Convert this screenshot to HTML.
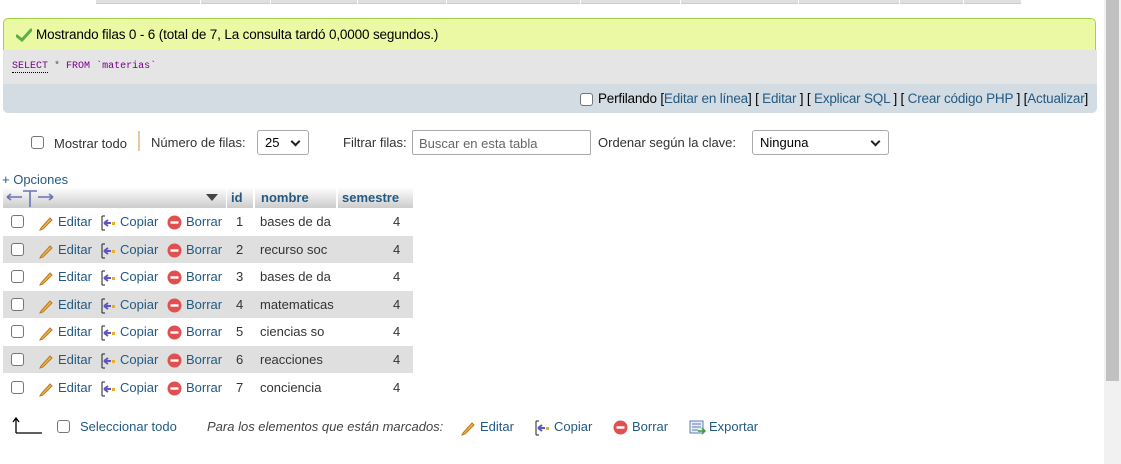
<!DOCTYPE html>
<html><head><meta charset="utf-8"><style>
*{box-sizing:border-box}
body{margin:0;width:1121px;height:464px;overflow:hidden;background:#fff;font-family:"Liberation Sans",Arial,sans-serif;font-size:13px;color:#444;position:relative}
.a{position:absolute;white-space:nowrap}
a,.l{color:#235a81;text-decoration:none}
.cb{position:absolute;width:13px;height:13px;border:1px solid #767676;border-radius:3px;background:#fff}
.row{position:absolute;left:3px;width:410px;height:27px}
.sel{position:absolute;border:1px solid #aaa;border-radius:3px;background:#fff;color:#000;font-size:13px;padding:0 0 0 7px;line-height:24px}
.sel:after{content:"";position:absolute;right:9px;top:7px;width:5px;height:5px;border-right:2px solid #222;border-bottom:2px solid #222;transform:rotate(45deg)}
</style></head><body>
<div class="a" style="left:96px;top:0;width:925px;height:4px;background:#e0e0e0;border-bottom:1px solid #ccc"></div>
<div class="a" style="left:200px;top:0;width:1px;height:4px;background:#fff"></div>
<div class="a" style="left:270px;top:0;width:1px;height:4px;background:#fff"></div>
<div class="a" style="left:357px;top:0;width:1px;height:4px;background:#fff"></div>
<div class="a" style="left:446px;top:0;width:1px;height:4px;background:#fff"></div>
<div class="a" style="left:580px;top:0;width:1px;height:4px;background:#fff"></div>
<div class="a" style="left:680px;top:0;width:1px;height:4px;background:#fff"></div>
<div class="a" style="left:798px;top:0;width:1px;height:4px;background:#fff"></div>
<div class="a" style="left:899px;top:0;width:1px;height:4px;background:#fff"></div>
<div class="a" style="left:963px;top:0;width:1px;height:4px;background:#fff"></div>
<div class="a" style="left:1104px;top:0;width:17px;height:464px;background:#f1f1f1"></div>
<div class="a" style="left:1106px;top:0;width:13px;height:381px;background:#c1c1c1"></div>
<div class="a" style="left:3px;top:18px;width:1093px;height:33px;background:#ebf8a4;border:1px solid #a2d246;border-bottom:none;border-radius:5px 5px 0 0"></div>
<svg class="a" style="left:16px;top:28px" width="16" height="14" viewBox="0 0 16 14"><path d="M1 8 L6 12 L15 2" stroke="#5ab040" stroke-width="3" fill="none" stroke-linecap="round"/></svg>
<div class="a" style="left:36px;top:27px;color:#000;font-size:13.5px;letter-spacing:-0.15px">Mostrando filas 0 - 6 (total de 7, La consulta tardó 0,0000 segundos.)</div>
<div class="a" style="left:3px;top:50px;width:1094px;height:34px;background:#e5e5e5"></div>
<div class="a" style="left:12px;top:61px;font-family:'Liberation Mono',monospace;font-size:10px;color:#708"><span style="border-bottom:1px dotted #000;color:#708">SELECT</span> <span style="color:#555">*</span> FROM <span style="color:#708">`materias`</span></div>
<div class="a" style="left:3px;top:84px;width:1094px;height:29px;background:#d3dce3;border-radius:0 0 5px 5px"></div>
<div class="cb" style="left:580px;top:93px"></div>
<div class="a" style="left:598px;top:91px;color:#000;font-size:13.5px;letter-spacing:-0.2px">Perfilando [<span class="l">Editar en línea</span>] [ <span class="l">Editar</span> ] [ <span class="l">Explicar SQL</span> ] [ <span class="l">Crear código PHP</span> ] [<span class="l">Actualizar</span>]</div>
<div class="cb" style="left:31px;top:136px"></div>
<div class="a" style="left:54px;top:136px;color:#333">Mostrar todo</div>
<div class="a" style="left:138px;top:131px;width:2px;height:20px;background:#e8c9a0"></div>
<div class="a" style="left:151px;top:135px;color:#333">Número de filas:</div>
<div class="sel" style="left:257px;top:130px;width:52px;height:25px">25</div>
<div class="a" style="left:343px;top:135px;color:#333">Filtrar filas:</div>
<div class="a" style="left:412px;top:130px;width:179px;height:25px;border:1px solid #aaa;border-radius:2px;color:#666;padding:5px 0 0 6px">Buscar en esta tabla</div>
<div class="a" style="left:598px;top:135px;color:#333">Ordenar según la clave:</div>
<div class="sel" style="left:752px;top:130px;width:137px;height:25px">Ninguna</div>
<div class="a" style="left:2px;top:172px"><span class="l">+ Opciones</span></div>
<div class="a" style="left:3px;top:187px;width:410px;height:21px;background:linear-gradient(#fff,#ccc)"></div>
<div class="a" style="left:226px;top:187px;width:1px;height:21px;background:#fff"></div>
<div class="a" style="left:253px;top:187px;width:2px;height:21px;background:#fff"></div>
<div class="a" style="left:336px;top:187px;width:2px;height:21px;background:#fff"></div>
<svg class="a" style="left:5px;top:188px" width="50" height="20" viewBox="0 0 50 20"><path d="M2 9 H17 M2 9 L6 6 M2 9 L6 12 M33 9 H48 M48 9 L44 6 M48 9 L44 12 M18 3 H32 M25 3 V19" stroke="#6a72b8" stroke-width="1.6" fill="none"/></svg>
<div class="a" style="left:206px;top:194px;width:0;height:0;border-left:6px solid transparent;border-right:6px solid transparent;border-top:7px solid #444"></div>
<div class="a" style="left:231px;top:190px;font-weight:bold;color:#235a81">id</div>
<div class="a" style="left:261px;top:190px;font-weight:bold;color:#235a81">nombre</div>
<div class="a" style="left:342px;top:190px;font-weight:bold;color:#235a81">semestre</div>
<div id="rows"></div>
<svg class="a" style="left:12px;top:417px" width="32" height="18" viewBox="0 0 32 18"><path d="M4 16 H30 M4 16 V2 M1 5 L4 1 L7 5" stroke="#000" stroke-width="1.3" fill="none"/></svg>
<div class="cb" style="left:57px;top:420px"></div>
<div class="a" style="left:80px;top:419px"><span class="l">Seleccionar todo</span></div>
<div class="a" style="left:207px;top:419px;font-style:italic;color:#444">Para los elementos que están marcados:</div>
<svg class="a" style="left:460px;top:420px" width="16" height="16" viewBox="0 0 16 16"><path d="M3 13 L12 3 L14 5 L5 14 L2 15 Z" fill="#f2b24a" stroke="#b77a1e"/></svg>
<div class="a" style="left:480px;top:419px"><span class="l">Editar</span></div>
<svg class="a" style="left:535px;top:420px" width="16" height="16" viewBox="0 0 16 16"><path d="M1 1 H4 M1 1 V15 M1 15 H4" stroke="#222" fill="none"/><path d="M3 8 H10 M3 8 L7 5 M3 8 L7 11" stroke="#5c54c8" stroke-width="2" fill="none"/><rect x="11" y="7" width="3" height="3" fill="#e8b020"/></svg>
<div class="a" style="left:554px;top:419px"><span class="l">Copiar</span></div>
<svg class="a" style="left:613px;top:420px" width="15" height="15" viewBox="0 0 15 15"><circle cx="7.5" cy="7.5" r="7" fill="#e05050"/><rect x="3.5" y="6.3" width="8" height="2.4" fill="#fff"/></svg>
<div class="a" style="left:632px;top:419px"><span class="l">Borrar</span></div>
<svg class="a" style="left:689px;top:420px" width="17" height="15" viewBox="0 0 17 15"><rect x="1" y="1" width="13" height="12" fill="#e8eef8" stroke="#5b7fb8"/><path d="M3 4H12M3 7H12M3 10H9" stroke="#5b7fb8"/><path d="M9 11 H16 M13 8 L16 11 L13 14" stroke="#3a9a3a" stroke-width="1.5" fill="none"/></svg>
<div class="a" style="left:709px;top:419px"><span class="l">Exportar</span></div>
<script>
var names=["bases de da","recurso soc","bases de da","matematicas","ciencias so","reacciones","conciencia"];
var h="";
for(var i=0;i<7;i++){var t=208+i*27.6;var bg=i%2?"#dfdfdf":"#fff";
h+='<div class="row" style="top:'+t+'px;background:'+bg+'"></div>';
var y=t+6;
h+='<div class="cb" style="left:11px;top:'+(t+7)+'px"></div>';
h+='<svg class="a" style="left:38px;top:'+(y+1)+'px" width="16" height="16" viewBox="0 0 16 16"><path d="M3 13 L12 3 L14 5 L5 14 L2 15 Z" fill="#f2b24a" stroke="#b77a1e"/></svg>';
h+='<div class="a" style="left:58px;top:'+y+'px"><span class="l">Editar</span></div>';
h+='<svg class="a" style="left:101px;top:'+(y+1)+'px" width="16" height="16" viewBox="0 0 16 16"><path d="M1 1 H4 M1 1 V15 M1 15 H4" stroke="#222" fill="none"/><path d="M3 8 H10 M3 8 L7 5 M3 8 L7 11" stroke="#5c54c8" stroke-width="2" fill="none"/><rect x="11" y="7" width="3" height="3" fill="#e8b020"/></svg>';
h+='<div class="a" style="left:120px;top:'+y+'px"><span class="l">Copiar</span></div>';
h+='<svg class="a" style="left:167px;top:'+(y+1)+'px" width="15" height="15" viewBox="0 0 15 15"><circle cx="7.5" cy="7.5" r="7" fill="#e05050"/><rect x="3.5" y="6.3" width="8" height="2.4" fill="#fff"/></svg>';
h+='<div class="a" style="left:186px;top:'+y+'px"><span class="l">Borrar</span></div>';
h+='<div class="a" style="left:236px;top:'+y+'px;color:#333">'+(i+1)+'</div>';
h+='<div class="a" style="left:260px;top:'+y+'px;color:#333">'+names[i]+'</div>';
h+='<div class="a" style="left:393px;top:'+y+'px;color:#333">4</div>';}
document.getElementById("rows").innerHTML=h;
</script>
</body></html>
